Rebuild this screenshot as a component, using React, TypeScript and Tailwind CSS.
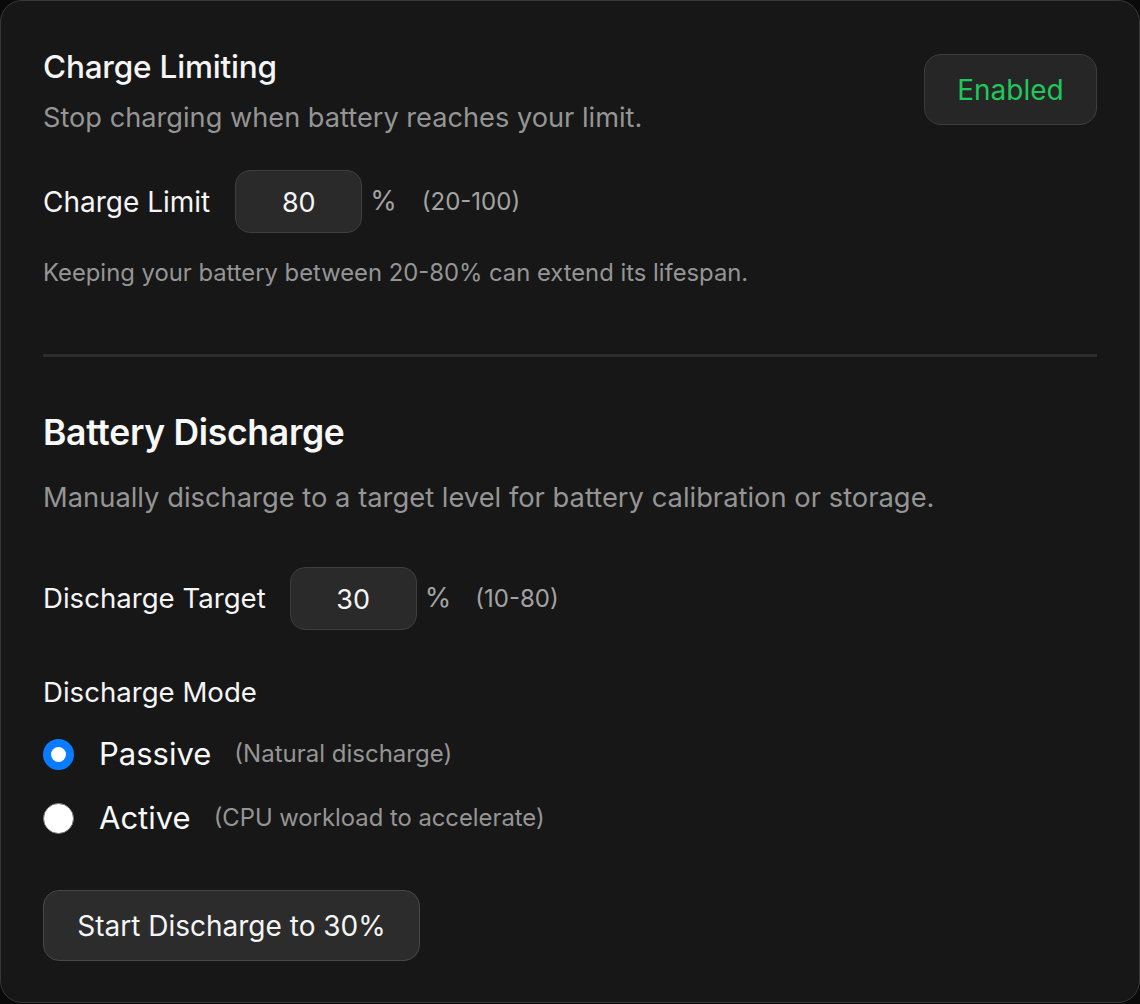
import React from "react";

const font = { fontFamily: "Inter, 'Noto Sans', sans-serif" };

function NumBox({ value }: { value: string }) {
  return (
    <div className="w-[127px] h-[63px] rounded-[15px] bg-[#2a2a2a] border border-[#3e3e3e] flex items-center justify-center pt-[4px] text-[27px] text-[#f5f5f5]">
      {value}
    </div>
  );
}

function Radio({ checked }: { checked: boolean }) {
  return checked ? (
    <div className="w-[31px] h-[31px] rounded-full bg-[#0a7cff] flex items-center justify-center">
      <div className="w-[15px] h-[15px] rounded-full bg-white" />
    </div>
  ) : (
    <div className="w-[31px] h-[31px] rounded-full bg-white border-[1.5px] border-[#777777]" />
  );
}

export default function App() {
  return (
    <div className="w-[1140px] h-[1004px] bg-[#0a0a0a]" style={font}>
      <div className="w-[1140px] h-[1003px] rounded-[22px] border border-[#383838] bg-[#171717] px-[42px] pt-[46px] antialiased">
        <div className="flex justify-between items-start">
          <div>
            <div className="text-[31.5px] leading-[40px] font-medium text-[#f5f5f5] tracking-[-0.2px]">Charge Limiting</div>
            <div className="mt-[15px] text-[27.2px] leading-[32px] text-[#959595]">Stop charging when battery reaches your limit.</div>
          </div>
          <button className="mt-[7px] w-[173px] h-[71px] rounded-[17px] bg-[#262626] border-[1.5px] border-[#3d3d3d] text-[28px] text-[#1fc85a]">
            Enabled
          </button>
        </div>

        <div className="mt-[36px] h-[63px] flex items-center">
          <span className="text-[28px] text-[#f5f5f5] mr-[25px]">Charge Limit</span>
          <NumBox value="80" />
          <span className="ml-[8px] text-[27px] text-[#a3a3a3]">%</span>
          <span className="ml-[25px] text-[24px] text-[#a3a3a3]">(20-100)</span>
        </div>

        <div className="mt-[25px] text-[23.8px] leading-[30px] text-[#959595]">
          Keeping your battery between 20-80% can extend its lifespan.
        </div>

        <div className="mt-[66px] h-[3px] bg-[#2d2d2d]" />

        <div className="mt-[54px] text-[35.5px] leading-[44px] font-semibold text-[#f8f8f8] tracking-[-0.3px]">Battery Discharge</div>
        <div className="mt-[27px] text-[27.35px] leading-[32px] text-[#959595]">
          Manually discharge to a target level for battery calibration or storage.
        </div>

        <div className="mt-[53px] h-[63px] flex items-center">
          <span className="text-[27.6px] text-[#f5f5f5] mr-[24px]">Discharge Target</span>
          <NumBox value="30" />
          <span className="ml-[8px] text-[27px] text-[#a3a3a3]">%</span>
          <span className="ml-[24px] text-[24px] text-[#a3a3a3]">(10-80)</span>
        </div>

        <div className="mt-[46px] text-[27.6px] leading-[32px] text-[#f5f5f5]">Discharge Mode</div>

        <div className="mt-[26px] h-[40px] flex items-center">
          <Radio checked />
          <span className="ml-[25px] text-[31px] text-[#f8f8f8]">Passive</span>
          <span className="ml-[23px] text-[24px] text-[#959595]">(Natural discharge)</span>
        </div>
        <div className="mt-[24px] h-[40px] flex items-center">
          <Radio checked={false} />
          <span className="ml-[25px] text-[31px] text-[#f8f8f8]">Active</span>
          <span className="ml-[23px] text-[23.8px] text-[#959595]">(CPU workload to accelerate)</span>
        </div>

        <button className="mt-[52px] w-[377px] h-[71px] rounded-[16px] bg-[#2c2c2c] border-[1.5px] border-[#474747] text-[28px] text-[#f5f5f5]">
          Start Discharge to 30%
        </button>
      </div>
    </div>
  );
}
